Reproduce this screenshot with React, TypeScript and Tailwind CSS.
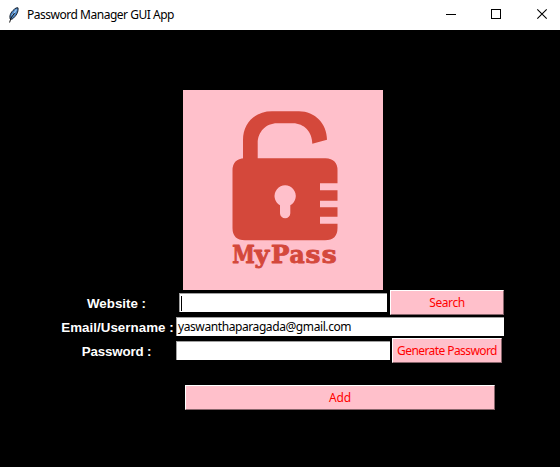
import type { ReactNode } from 'react';

const ui = "font-['Noto_Sans','Open_Sans',sans-serif] text-[12px]";

function Feather() {
  return (
    <svg width="12" height="16" viewBox="0 0 12 16" className="ml-2 shrink-0">
      <path d="M2.2 12 C1 8 3.5 4 8 1 L10 0.8 C10.6 4.5 8.5 9 4 12.2 Z" fill="#4d86c6" stroke="#16202c" strokeWidth="1" />
      <path d="M4 9 L8.5 2.5" stroke="#a9d2f5" strokeWidth="1.2" />
      <path d="M1.6 15.5 L3 11 L6.5 6" fill="none" stroke="#111" strokeWidth="1" />
    </svg>
  );
}

function TitleBar() {
  return (
    <header className={`${ui} flex h-[30px] w-full items-center bg-white text-black`}>
      <Feather />
      <span className="ml-[7px] tracking-[-0.48px] whitespace-nowrap">Password Manager GUI App</span>
      <svg width="104" height="30" viewBox="0 0 104 30" className="mr-[10px] ml-auto" fill="none" stroke="#000">
        <path d="M0 14.5 H10 M45.5 9.5 H54.5 V18.5 H45.5 Z" shapeRendering="crispEdges" />
        <path d="M91.3 9.3 L100.7 18.7 M100.7 9.3 L91.3 18.7" strokeWidth="1.1" />
      </svg>
    </header>
  );
}

const letters = [
  { ch: 'M', x: 49.3, sx: 0.85 },
  { ch: 'y', x: 71.4, sx: 1.06 },
  { ch: 'P', x: 88, sx: 1.02 },
  { ch: 'a', x: 106.6, sx: 0.98 },
  { ch: 's', x: 122.6, sx: 1.1 },
  { ch: 's', x: 138.8, sx: 1.1 },
];

function Logo() {
  return (
    <svg width="200" height="200" viewBox="0 0 200 200" className="ml-[183px] block bg-[#ffc0cb]">
      <g fill="#d4483b">
        <path d="M60 72 V50 C60 33 72 21.3 89 21.3 H116 C132 21.3 144 34 144 49.7 L129.3 53.7 C129.3 42 121 33.3 110 33.3 H94 C83 33.3 74.7 42 74.7 53 V72 Z" />
        <path d="M61.5 68.3 H142.5 Q154.5 69 154.5 80.3 V93.3 H137 V100.3 H154.5 V110.7 H137 V117.3 H154.5 V126.7 H137 V133.7 H154.5 V138 Q154.5 150.3 142 150.3 H62 Q49.5 150.3 49.5 138 V80.3 Q49.5 69 61.5 68.3 Z" />
        <g fontFamily="'DejaVu Serif', serif" fontWeight="700" fontSize="24" stroke="#d4483b" strokeWidth="0.9" strokeLinejoin="round">
          {letters.map((l) => (
            <text key={l.x} transform={`translate(${l.x} 172.6) scale(${l.sx} 1)`}>{l.ch}</text>
          ))}
        </g>
      </g>
      <path d="M97 115.2 A10.6 10.6 0 1 1 107.3 115.2 V123.2 A5.15 5.15 0 0 1 97 123.2 Z" fill="#ffc0cb" />
    </svg>
  );
}

function Label({ className = '', children }: { className?: string; children: ReactNode }) {
  return (
    <span className={`w-[117px] shrink-0 pt-[2px] text-center font-['Liberation_Sans',Arial,sans-serif] text-[13.33px] leading-[20px] font-bold whitespace-nowrap text-white ${className}`}>
      {children}
    </span>
  );
}

function Entry({ className, children }: { className: string; children?: ReactNode }) {
  return (
    <div className={`${ui} flex h-[19px] shrink-0 items-center border-t border-l border-[#a0a0a0] bg-white text-black ${className}`}>
      {children}
    </div>
  );
}

function PinkButton({ className, children }: { className: string; children: ReactNode }) {
  return (
    <button className={`${ui} flex h-[25px] shrink-0 items-center justify-center border border-t-white border-r-[#87656b] border-b-[#87656b] border-l-white bg-[#ffc0cb] whitespace-nowrap text-[#ff0000] ${className}`}>
      {children}
    </button>
  );
}

export default function App() {
  return (
    <div className="h-[467px] w-[560px] overflow-hidden bg-black">
      <TitleBar />
      <main className="pt-[60px]">
        <Logo />
        <div className="flex h-[25px] items-center pl-[58px]">
          <Label>Website :</Label>
          <Entry className="ml-1 w-[208px]">
            <span className="ml-px h-[15px] w-px bg-black" />
          </Entry>
          <PinkButton className="ml-[3px] w-[114px] tracking-[-0.4px]">Search</PinkButton>
        </div>
        <div className="flex h-[23px] items-center pl-[59px]">
          <Label className="tracking-[0.04px]">Email/Username :</Label>
          <Entry className="w-[328px]">
            <span className="ml-px tracking-[-0.41px]">yaswanthaparagada@gmail.com</span>
          </Entry>
        </div>
        <div className="flex h-[25px] items-center pl-[58px]">
          <Label className="tracking-[-0.15px]">Password :</Label>
          <Entry className="ml-px w-[214px]" />
          <PinkButton className="ml-[2px] w-[110px] tracking-[-0.58px]">Generate Password</PinkButton>
        </div>
        <PinkButton className="mt-[22px] ml-[185px] w-[310px] tracking-[-0.2px]">Add</PinkButton>
      </main>
    </div>
  );
}
